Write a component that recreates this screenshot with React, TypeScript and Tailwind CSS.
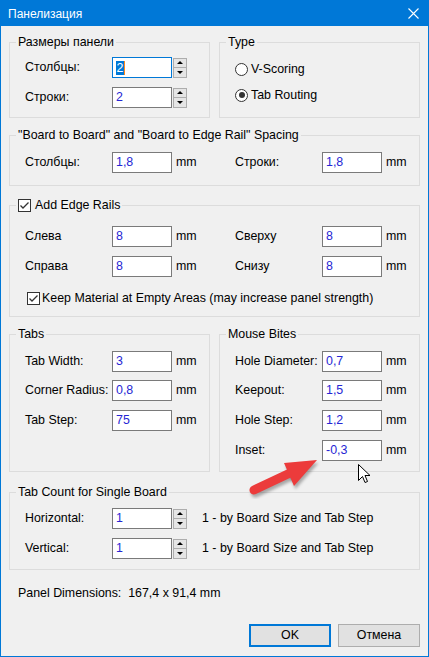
import type { ReactNode } from 'react';

function Box({ legend, className = '', children }: { legend: ReactNode; className?: string; children?: ReactNode }) {
  return (
    <fieldset className={`border border-[#dcdcdc] ${className}`}>
      <legend className="ml-[6px] px-[2px] leading-[16px]">{legend}</legend>
      <div className="pl-[15px]">{children}</div>
    </fieldset>
  );
}

function Field({ value, focused }: { value: string; focused?: boolean }) {
  return (
    <div
      className={`flex h-[21px] w-[60px] items-center border bg-white pl-[3px] text-[#2626d4] ${
        focused ? 'border-[#0078d7]' : 'border-[#7a7a7a]'
      }`}
    >
      {focused ? (
        <>
          <span className="bg-[#0078d7] px-[0.5px] leading-[14px] text-white">{value}</span>
          <span className="h-[14px] w-[1px] bg-[#ff8a1c]" />
        </>
      ) : (
        value
      )}
    </div>
  );
}

function Spin() {
  return (
    <div className="ml-[1px] flex h-[20px] w-[14px] flex-col border border-[#adadad] bg-[#e5e5e5]">
      <div className="flex flex-1 items-center justify-center border-b border-[#adadad]">
        <span className="h-0 w-0 border-x-[3px] border-b-[3px] border-x-transparent border-b-black" />
      </div>
      <div className="flex flex-1 items-center justify-center">
        <span className="h-0 w-0 border-x-[3px] border-t-[3px] border-x-transparent border-t-black" />
      </div>
    </div>
  );
}

function Row({
  label,
  value,
  unit,
  spin,
  focused,
  className = '',
}: {
  label: string;
  value: string;
  unit?: string;
  spin?: boolean;
  focused?: boolean;
  className?: string;
}) {
  return (
    <div className={`flex h-[21px] items-center ${className}`}>
      <span className="w-[87px]">{label}</span>
      <Field value={value} focused={focused} />
      {spin && <Spin />}
      {unit && <span className="ml-[4px]">{unit}</span>}
    </div>
  );
}

function Check() {
  return (
    <span className="flex h-[13px] w-[13px] items-center justify-center border border-[#333] bg-white">
      <svg width="11" height="11" viewBox="0 0 11 11">
        <polyline points="1.5,5.5 4,8 9.5,2.5" fill="none" stroke="#333" strokeWidth="1.3" />
      </svg>
    </span>
  );
}

function Radio({ label, on, className = '' }: { label: string; on?: boolean; className?: string }) {
  return (
    <div className={`flex h-[16px] items-center gap-[3px] ${className}`}>
      <span className="flex h-[13px] w-[13px] items-center justify-center rounded-full border border-[#333] bg-white">
        {on && <span className="h-[6px] w-[6px] rounded-full bg-[#333]" />}
      </span>
      {label}
    </div>
  );
}

export default function App() {
  return (
    <div className="relative flex h-[657px] w-[429px] flex-col overflow-hidden border border-[#0078d7] bg-[#f0f0f0] font-['Liberation_Sans',Arial,sans-serif] text-[12.4px] text-black">
      {/* title bar */}
      <div className="flex h-[25px] shrink-0 items-center justify-between bg-[#0078d7] pl-[7px] pr-[9px] text-[12px] text-white">
        <span>Панелизация</span>
        <svg width="11" height="11" viewBox="0 0 11 11">
          <path d="M0.5 0.5 L10.5 10.5 M10.5 0.5 L0.5 10.5" stroke="white" strokeWidth="1.1" />
        </svg>
      </div>

      <div className="flex flex-col px-[8px]">
        <div className="mt-[8px] flex gap-[9px]">
          <Box legend="Размеры панели" className="h-[84px] w-[201px]">
            <Row label="Столбцы:" value="2" spin focused className="mt-[7px]" />
            <Row label="Строки:" value="2" spin className="mt-[9px]" />
          </Box>
          <Box legend="Type" className="h-[84px] w-[201px]">
            <Radio label="V-Scoring" className="mt-[11px]" />
            <Radio label="Tab Routing" on className="mt-[10px]" />
          </Box>
        </div>

        <Box legend={'"Board to Board" and "Board to Edge Rail" Spacing'} className="mt-[9px] h-[59px]">
          <div className="mt-[9px] flex">
            <Row label="Столбцы:" value="1,8" unit="mm" className="w-[210px]" />
            <Row label="Строки:" value="1,8" unit="mm" />
          </div>
        </Box>

        <Box
          legend={
            <span className="flex items-center gap-[4px]">
              <Check />
              Add Edge Rails
            </span>
          }
          className="mt-[11px] h-[120px]"
        >
          <div className="mt-[13px] flex">
            <Row label="Слева" value="8" unit="mm" className="w-[210px]" />
            <Row label="Сверху" value="8" unit="mm" />
          </div>
          <div className="mt-[9px] flex">
            <Row label="Справа" value="8" unit="mm" className="w-[210px]" />
            <Row label="Снизу" value="8" unit="mm" />
          </div>
          <div className="ml-[2px] mt-[13px] flex h-[16px] items-center gap-[2px]">
            <Check />
            Keep Material at Empty Areas (may increase panel strength)
          </div>
        </Box>

        <div className="mt-[9px] flex gap-[9px]">
          <Box legend="Tabs" className="h-[146px] w-[201px]">
            <Row label="Tab Width:" value="3" unit="mm" className="mt-[9px]" />
            <Row label="Corner Radius:" value="0,8" unit="mm" className="mt-[8px]" />
            <Row label="Tab Step:" value="75" unit="mm" className="mt-[9px]" />
          </Box>
          <Box legend="Mouse Bites" className="h-[146px] w-[201px]">
            <Row label="Hole Diameter:" value="0,7" unit="mm" className="mt-[9px]" />
            <Row label="Keepout:" value="1,5" unit="mm" className="mt-[8px]" />
            <Row label="Hole Step:" value="1,2" unit="mm" className="mt-[9px]" />
            <Row label="Inset:" value="-0,3" unit="mm" className="mt-[9px]" />
          </Box>
        </div>

        <Box legend="Tab Count for Single Board" className="mt-[12px] h-[86px]">
          <div className="mt-[8px] flex items-center">
            <Row label="Horizontal:" value="1" spin />
            <span className="ml-[15px]">1 - by Board Size and Tab Step</span>
          </div>
          <div className="mt-[9px] flex items-center">
            <Row label="Vertical:" value="1" spin />
            <span className="ml-[15px]">1 - by Board Size and Tab Step</span>
          </div>
        </Box>

        <div className="mt-[15px] whitespace-pre pl-[9px] leading-[16px]">Panel Dimensions:  167,4 x 91,4 mm</div>

        <div className="mt-[23px] flex justify-end gap-[7px]">
          <button className="h-[23px] w-[82px] border-2 border-[#0078d7] bg-[#e1e1e1]">OK</button>
          <button className="h-[23px] w-[82px] border border-[#adadad] bg-[#e1e1e1]">Отмена</button>
        </div>
      </div>

      {/* red pointer arrow */}
      <svg className="absolute left-[239px] top-[449px]" width="90" height="52" viewBox="0 0 90 52">
        <defs>
          <filter id="sh" x="-20%" y="-20%" width="140%" height="140%">
            <feGaussianBlur stdDeviation="1.5" />
          </filter>
        </defs>
        <g transform="translate(1.5,3)" fill="rgba(0,0,0,0.3)" stroke="rgba(0,0,0,0.3)" filter="url(#sh)">
          <line x1="14" y1="40" x2="50" y2="23" strokeWidth="9" strokeLinecap="round" />
          <polygon points="77,10 44,13 54,36" stroke="none" />
        </g>
        <line x1="14" y1="40" x2="50" y2="23" stroke="#ec3b3b" strokeWidth="9" strokeLinecap="round" />
        <polygon points="77,10 44,13 54,36" fill="#ec3b3b" />
      </svg>

      {/* mouse cursor */}
      <svg className="absolute left-[357px] top-[463px]" width="13" height="21" viewBox="0 0 13 21">
        <path d="M0.5 0.5 L0.5 16.5 L4.5 12.5 L7 18.5 L9.5 17.5 L7 11.5 L12 11.5 Z" fill="white" stroke="black" strokeWidth="1" />
      </svg>
    </div>
  );
}
